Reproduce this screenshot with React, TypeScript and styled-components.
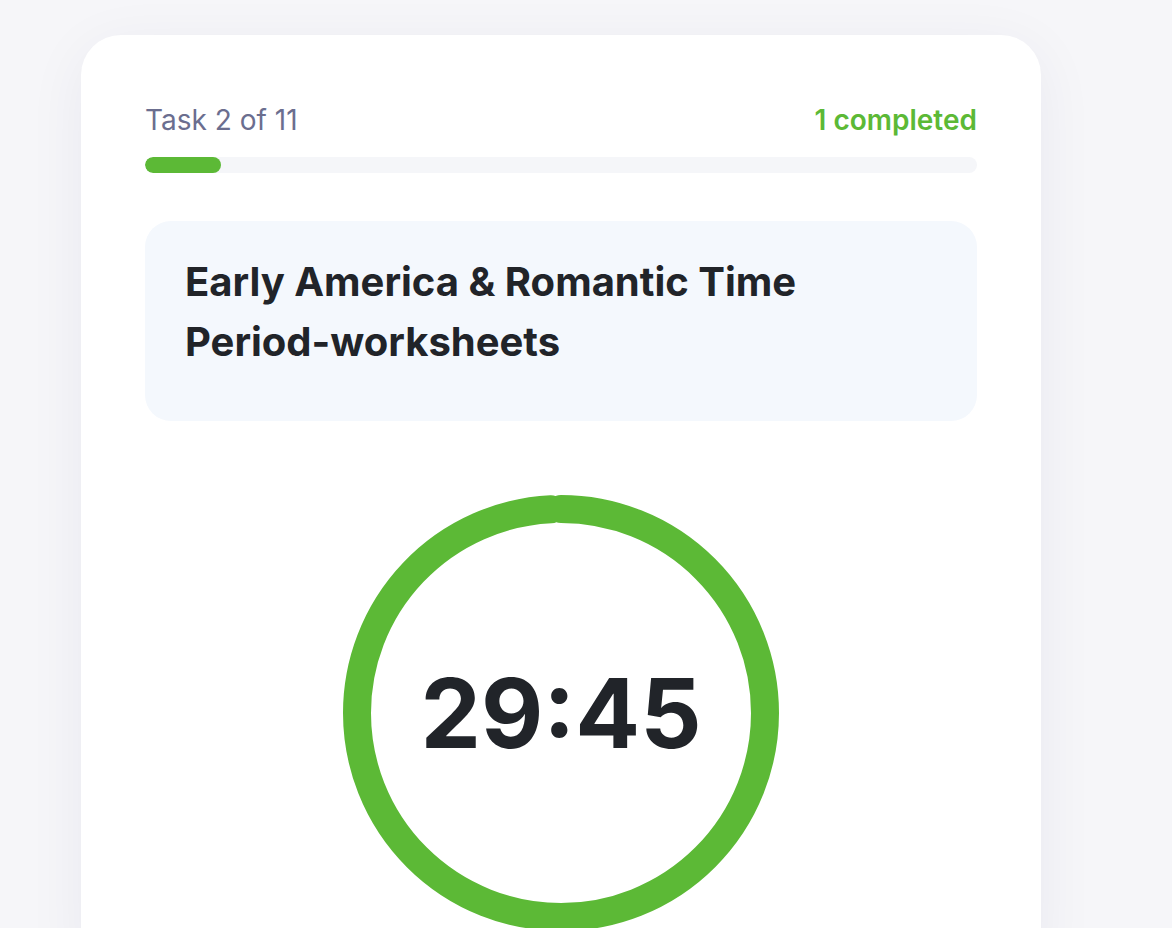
import React from "react";
import styled, { createGlobalStyle } from "styled-components";

const Global = createGlobalStyle`
  html, body { margin: 0; padding: 0; }
  body {
    background: #f6f6f9;
    font-family: Inter, "Noto Sans", sans-serif;
    -webkit-font-smoothing: antialiased;
  }
`;

const Page = styled.div`
  min-height: 928px;
  padding: 35px 0 0 81px;
  box-sizing: border-box;
  overflow: hidden;
`;

const Card = styled.div`
  width: 960px;
  min-height: 940px;
  box-sizing: border-box;
  background: #ffffff;
  border-radius: 40px;
  padding: 64px 64px 0;
  box-shadow: 0 12px 60px rgba(40, 40, 80, 0.06);
  display: flex;
  flex-direction: column;
`;

const HeaderRow = styled.div`
  display: flex;
  justify-content: space-between;
  align-items: center;
  line-height: 42px;
  height: 42px;
`;

const TaskLabel = styled.span`
  font-size: 28px;
  font-weight: 400;
  color: #6b6e8f;
`;

const Completed = styled.span`
  font-size: 28px;
  font-weight: 600;
  color: #5cb936;
`;

const Track = styled.div`
  margin-top: 16px;
  height: 16px;
  border-radius: 8px;
  background: #f5f6f9;
  overflow: hidden;
`;

const Fill = styled.div`
  height: 100%;
  border-radius: 8px;
  background: #5cb936;
`;

const TitleBox = styled.div`
  margin-top: 48px;
  min-height: 200px;
  box-sizing: border-box;
  background: #f4f8fd;
  border-radius: 26px;
  padding: 31px 40px 49px;
`;

const Title = styled.h1`
  margin: 0;
  font-size: 40px;
  line-height: 60px;
  font-weight: 700;
  color: #212429;
  max-width: 680px;
`;

const TimerWrap = styled.div`
  margin-top: 74px;
  align-self: center;
  position: relative;
  width: 436px;
  height: 436px;
`;

const TimerText = styled.div`
  position: absolute;
  inset: 0;
  display: flex;
  align-items: center;
  justify-content: center;
  font-size: 96px;
  font-weight: 700;
  color: #212429;
`;

const total = 30 * 60;
const remaining = 29 * 60 + 45;

export default function App() {
  const r = 204;
  const c = 2 * Math.PI * r;
  const frac = remaining / total;
  return (
    <>
      <Global />
      <Page>
        <Card>
          <HeaderRow>
            <TaskLabel>Task 2 of 11</TaskLabel>
            <Completed>1 completed</Completed>
          </HeaderRow>
          <Track>
            <Fill style={{ width: `${(1 / 11) * 100}%` }} />
          </Track>
          <TitleBox>
            <Title>Early America &amp; Romantic Time Period-worksheets</Title>
          </TitleBox>
          <TimerWrap>
            <svg width="436" height="436" viewBox="0 0 436 436">
              <circle
                cx="218"
                cy="218"
                r={r}
                fill="none"
                stroke="#5cb936"
                strokeWidth="28"
                strokeLinecap="round"
                strokeDasharray={`${c * frac} ${c}`}
                transform="rotate(-90 218 218)"
              />
            </svg>
            <TimerText>29:45</TimerText>
          </TimerWrap>
        </Card>
      </Page>
    </>
  );
}
